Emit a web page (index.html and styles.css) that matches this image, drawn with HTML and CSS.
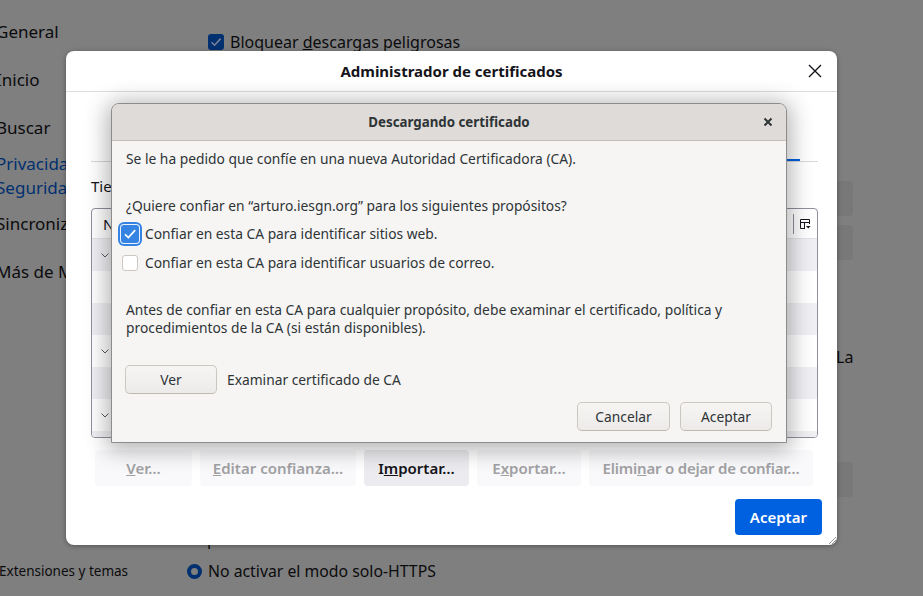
FILE: index.html
```html
<!DOCTYPE html>
<html lang="es">
<head>
<meta charset="utf-8">
<title>Preferencias</title>
<link rel="stylesheet" href="styles.css">
</head>
<body>
<div class="prefs">
  <nav class="sidebar">
    <div class="nav-item">General</div>
    <div class="nav-item">Inicio</div>
    <div class="nav-item">Buscar</div>
    <div class="nav-item nav-active">Privacidad &amp;<br>Seguridad</div>
    <div class="nav-item">Sincronizar</div>
    <div class="nav-item">Más de Mozilla</div>
    <div class="nav-footer">Extensiones y temas</div>
  </nav>
  <main class="content">
    <div class="pref-check"><span class="dim-checkbox"><svg viewBox="0 0 16 16" width="16" height="16"><path d="M3.5 8.2 L6.6 11.2 L12.6 4.6" fill="none" stroke="#7c8095" stroke-width="1.6"/></svg></span><span>Bloquear <u>d</u>escargas peligrosas</span></div>
    <div class="dim-btn dim-btn-1">Ver certificados…</div>
    <div class="dim-btn dim-btn-2">Dispositivos de seguridad…</div>
    <div class="pref-text">La</div>
    <div class="dim-btn dim-btn-3">Administrar excepciones…</div>
    <div class="pref-desc">p</div>
    <div class="pref-radio"><span class="dim-radio"></span><span>No activar el modo solo-HTTPS</span></div>
  </main>
</div>

<div class="certmgr">
  <header class="cm-header">
    <span></span>
    <span class="cm-title">Administrador de certificados</span>
    <svg class="cm-close" viewBox="0 0 16 16" width="16" height="16"><path d="M2 2 L14 14 M14 2 L2 14" stroke="#15141a" stroke-width="1.4" fill="none"/></svg>
  </header>
  <div class="cm-body">
    <div class="cm-tabs">
      <span class="cm-tab">Sus certificados</span>
      <span class="cm-tab">Decisiones de autenticación</span>
      <span class="cm-tab">Personas</span>
      <span class="cm-tab">Servidores</span>
      <span class="cm-tab cm-tab-sel">Autoridades</span>
    </div>
    <div class="cm-intro">Tiene certificados en archivo que identifican a estas autoridades certificadoras:</div>
    <div class="cm-table">
      <div class="cm-thead">
        <span class="cm-th">Nombre del certificado</span>
        <span class="cm-th cm-th-2">Dispositivo de seguridad</span>
        <span class="cm-th-sep"></span>
        <svg class="cm-colpick" viewBox="0 0 12 12" width="12" height="12"><path d="M1.5 1.5 H10.5 V6 M1.5 1.5 V10.5 H6 M1.5 4.5 H10.5 M5.5 4.5 V10.5" fill="none" stroke="#15141a" stroke-width="1"/><path d="M7 8 H11.5 L9.25 10.5 Z" fill="#15141a"/></svg>
      </div>
      <div class="cm-row cm-row-alt"><svg class="chev" viewBox="0 0 8 5" width="8" height="5"><path d="M0.5 0.5 L4 4 L7.5 0.5" fill="none" stroke="#5b5b66" stroke-width="1"/></svg><span>ACCV</span></div>
      <div class="cm-row"><span class="cm-child">ACCVRAIZ1</span></div>
      <div class="cm-row cm-row-alt"><span class="cm-child">ACCV Raíz</span></div>
      <div class="cm-row"><svg class="chev" viewBox="0 0 8 5" width="8" height="5"><path d="M0.5 0.5 L4 4 L7.5 0.5" fill="none" stroke="#5b5b66" stroke-width="1"/></svg><span>Actalis S.p.A.</span></div>
      <div class="cm-row cm-row-alt"><span class="cm-child">Actalis Authentication Root CA</span></div>
      <div class="cm-row"><svg class="chev" viewBox="0 0 8 5" width="8" height="5"><path d="M0.5 0.5 L4 4 L7.5 0.5" fill="none" stroke="#5b5b66" stroke-width="1"/></svg><span>AffirmTrust</span></div>
      <div class="cm-row cm-row-alt"><span class="cm-child">AffirmTrust Commercial</span></div>
    </div>
    <div class="cm-buttons">
      <button class="cm-btn cm-btn-view" disabled><u>V</u>er…</button>
      <button class="cm-btn cm-btn-edit" disabled><u>E</u>ditar confianza…</button>
      <button class="cm-btn cm-btn-import">I<u>m</u>portar…</button>
      <button class="cm-btn cm-btn-export" disabled>E<u>x</u>portar…</button>
      <button class="cm-btn cm-btn-delete" disabled>Elimi<u>n</u>ar o dejar de confiar…</button>
    </div>
    <div class="cm-footer">
      <button class="cm-primary">Aceptar</button>
    </div>
  </div>
  <svg class="cm-grip" viewBox="0 0 10 10" width="10" height="10"><path d="M9 2 L2 9 M9 5 L5 9 M9 8 L8 9" stroke="#9a9aa0" stroke-width="1"/></svg>
</div>

<div class="gtk">
  <div class="gtk-titlebar">
    <span></span>
    <span class="gtk-title">Descargando certificado</span>
    <svg class="gtk-close" viewBox="0 0 10 10" width="10" height="10"><path d="M1.5 1.5 L8.5 8.5 M8.5 1.5 L1.5 8.5" stroke="#2e3436" stroke-width="2" fill="none"/></svg>
  </div>
  <div class="gtk-body">
    <p class="gtk-p1">Se le ha pedido que confíe en una nueva Autoridad Certificadora (CA).</p>
    <p class="gtk-p2">¿Quiere confiar en “arturo.iesgn.org” para los siguientes propósitos?</p>
    <div class="gtk-check gtk-check-1"><span class="gtk-cb gtk-cb-on"><svg viewBox="0 0 18 18" width="18" height="18"><path d="M4 9.3 L7.4 12.6 L14.2 5.2" fill="none" stroke="#fff" stroke-width="1.7"/></svg></span><span>Confiar en esta CA para identificar sitios web.</span></div>
    <div class="gtk-check gtk-check-2"><span class="gtk-cb"></span><span>Confiar en esta CA para identificar usuarios de correo.</span></div>
    <p class="gtk-p3">Antes de confiar en esta CA para cualquier propósito, debe examinar el certificado, política y<br>procedimientos de la CA (si están disponibles).</p>
    <div class="gtk-view"><button class="gtk-btn">Ver</button><span>Examinar certificado de CA</span></div>
    <div class="gtk-actions"><button class="gtk-btn gtk-btn-cancel">Cancelar</button><button class="gtk-btn">Aceptar</button></div>
  </div>
</div>
</body>
</html>
```
FILE: styles.css
```css
html, body {
  margin: 0;
  padding: 0;
}
body {
  width: 923px;
  height: 596px;
  overflow: hidden;
  background: #7f7f7f;
  font-family: "Noto Sans", sans-serif;
  color: #0b0b0d;
  position: relative;
}

/* ---------- dimmed preferences page ---------- */
.prefs {
  display: grid;
  grid-template-columns: 187px 1fr;
  height: 596px;
}
.sidebar {
  display: flex;
  flex-direction: column;
  padding-top: 8px;
  padding-bottom: 15px;
  margin-left: -4px;
  font-size: 17px;
}
.nav-item {
  height: 48px;
  display: flex;
  align-items: center;
  line-height: 24px;
}
.nav-active {
  color: #003070;
}
.nav-footer {
  margin-top: auto;
  font-size: 13.5px;
  line-height: 20px;
  margin-left: 3px;
}
.content {
  display: flex;
  flex-direction: column;
  width: 666px;
  font-size: 16px;
}
.pref-check {
  margin: 30px 0 0 21px;
  height: 24px;
  line-height: 24px;
  display: flex;
  align-items: center;
  gap: 6px;
}
.dim-checkbox {
  width: 16px;
  height: 16px;
  border-radius: 3px;
  background: #003070;
  display: flex;
}
.dim-btn {
  align-self: flex-end;
  height: 35px;
  line-height: 35px;
  padding: 0 16px;
  border-radius: 4px;
  background: #787879;
  color: #0b0b0d;
  font-size: 15px;
}
.dim-btn-1 { margin-top: 127px; }
.dim-btn-2 { margin-top: 9px; }
.dim-btn-3 { margin-top: 95px; }
.pref-text {
  margin: 87px 0 0 649px;
  line-height: 20px;
}
.pref-desc {
  margin: 32px 0 0 20px;
  line-height: 20px;
}
.pref-radio {
  margin-top: 10px;
  line-height: 24px;
  height: 24px;
  display: flex;
  align-items: center;
  gap: 6px;
  font-size: 15.8px;
}
.dim-radio {
  width: 15px;
  height: 15px;
  border-radius: 50%;
  box-sizing: border-box;
  border: 4px solid #003070;
  background: #7f7f7f;
}

/* ---------- certificate manager ---------- */
.certmgr {
  position: absolute;
  left: 66px;
  top: 51px;
  width: 771px;
  height: 494px;
  background: #fff;
  border-radius: 8px;
  box-shadow: 0 1px 5px rgba(0, 0, 0, 0.35);
  display: flex;
  flex-direction: column;
  color: #15141a;
  font-size: 15px;
  overflow: hidden;
}
.cm-header {
  height: 41px;
  box-sizing: border-box;
  border-bottom: 1px solid #dcdce1;
  display: grid;
  grid-template-columns: 1fr auto 1fr;
  align-items: center;
  padding: 0 14px 0 14px;
}
.cm-title {
  font-weight: 700;
  font-size: 15px;
}
.cm-close {
  justify-self: end;
}
.cm-body {
  flex: 1;
  display: flex;
  flex-direction: column;
  padding: 0 19px 10px 25px;
}
.cm-tabs {
  height: 70px;
  box-sizing: border-box;
  border-bottom: 1px solid #d7d7dc;
  display: flex;
  justify-content: flex-end;
  align-items: flex-end;
  padding-right: 18px;
  gap: 6px;
}
.cm-tab {
  padding: 8px 14px;
  line-height: 20px;
  border-bottom: 2px solid transparent;
}
.cm-tab-sel {
  border-bottom-color: #0061e0;
}
.cm-intro {
  margin-top: 14px;
  line-height: 20px;
  white-space: nowrap;
}
.cm-table {
  margin-top: 12px;
  height: 230px;
  box-sizing: border-box;
  border: 1px solid #8f8f9d;
  border-radius: 4px;
  overflow: hidden;
  display: flex;
  flex-direction: column;
}
.cm-thead {
  height: 30px;
  flex: none;
  box-sizing: border-box;
  border-bottom: 1px solid #e3e3e8;
  display: flex;
  align-items: center;
  padding-left: 11px;
  padding-right: 6px;
}
.cm-th-2 {
  margin-left: auto;
  margin-right: 230px;
}
.cm-th-sep {
  width: 1px;
  height: 20px;
  background: #8f8f9d;
  margin-right: 5px;
}
.cm-row {
  height: 32px;
  flex: none;
  display: flex;
  align-items: center;
  padding-left: 9px;
  gap: 8px;
}
.cm-row-alt {
  background: #f0f0f4;
}
.cm-child {
  padding-left: 34px;
}
.cm-buttons {
  display: flex;
  gap: 8px;
  margin: 12px 0 0 4px;
}
.cm-btn {
  height: 36px;
  padding: 0;
  border: none;
  border-radius: 4px;
  background: #f9f9fb;
  color: #a1a1a4;
  font-family: "Noto Sans", sans-serif;
  font-size: 15px;
  font-weight: 600;
  white-space: nowrap;
}
.cm-btn-view { width: 97px; }
.cm-btn-edit { width: 156px; }
.cm-btn-import { width: 105px; }
.cm-btn-export { width: 104px; }
.cm-btn-delete { width: 224px; letter-spacing: -0.2px; }
.cm-btn-import {
  background: #ececf0;
  color: #15141a;
}
.cm-footer {
  display: flex;
  justify-content: flex-end;
  margin: 13px -4px 0 0;
}
.cm-primary {
  height: 36px;
  padding: 0 15px;
  border: none;
  border-radius: 4px;
  background: #0061e0;
  color: #fff;
  font-family: "Noto Sans", sans-serif;
  font-size: 15px;
  font-weight: 600;
}
.cm-grip {
  position: absolute;
  right: 0;
  bottom: 0;
}

/* ---------- GTK dialog ---------- */
.gtk {
  position: absolute;
  left: 111px;
  top: 103px;
  width: 676px;
  height: 340px;
  box-sizing: border-box;
  border: 1px solid #8e8c8a;
  border-radius: 8px 8px 0 0;
  background: #f6f5f4;
  box-shadow: 0 3px 22px 4px rgba(0, 0, 0, 0.3);
  display: flex;
  flex-direction: column;
  color: #2e3436;
  font-size: 13.8px;
}
.gtk-titlebar {
  height: 37px;
  flex: none;
  box-sizing: border-box;
  background: #dedbd8;
  border-bottom: 1px solid #c3bfbb;
  border-radius: 7px 7px 0 0;
  display: grid;
  grid-template-columns: 1fr auto 1fr;
  align-items: center;
  padding: 0 13px;
}
.gtk-title {
  font-weight: 700;
  font-size: 13.3px;
}
.gtk-close {
  justify-self: end;
}
.gtk-body {
  flex: 1;
  display: flex;
  flex-direction: column;
  padding: 9px 14px 11px 14px;
}
.gtk-body p {
  margin: 0;
  line-height: 18px;
}
.gtk-p2 { margin-top: 29px !important; }
.gtk-check {
  display: flex;
  align-items: center;
  height: 20px;
  line-height: 20px;
}
.gtk-check-1 { margin: 9px 0 0 -5px; gap: 6px; }
.gtk-check-2 { margin: 9px 0 0 -4px; gap: 7px; }
.gtk-cb {
  width: 16px;
  height: 16px;
  box-sizing: border-box;
  border: 1px solid #cdc7c2;
  border-radius: 3px;
  background: #fff;
}
.gtk-cb-on {
  width: 18px;
  height: 18px;
  border: none;
  background: #3584e4;
  display: flex;
  box-shadow: 0 0 0 1px #e9f1fb, 0 0 0 3px #3584e4;
}
.gtk-p3 { margin-top: 28px !important; }
.gtk-view {
  margin: 28px 0 0 -1px;
  display: flex;
  align-items: center;
  gap: 10px;
}
.gtk-btn {
  width: 92px;
  height: 29px;
  box-sizing: border-box;
  border: 1px solid #cdc7c2;
  border-bottom-color: #bfb8b1;
  border-radius: 5px;
  background: linear-gradient(#f6f5f4, #edebe9);
  color: #2e3436;
  font-family: "Noto Sans", sans-serif;
  font-size: 13.8px;
  padding: 0;
}
.gtk-btn-cancel {
  width: 93px;
}
.gtk-actions {
  margin-top: 8px;
  display: flex;
  justify-content: flex-end;
  gap: 10px;
}
```
